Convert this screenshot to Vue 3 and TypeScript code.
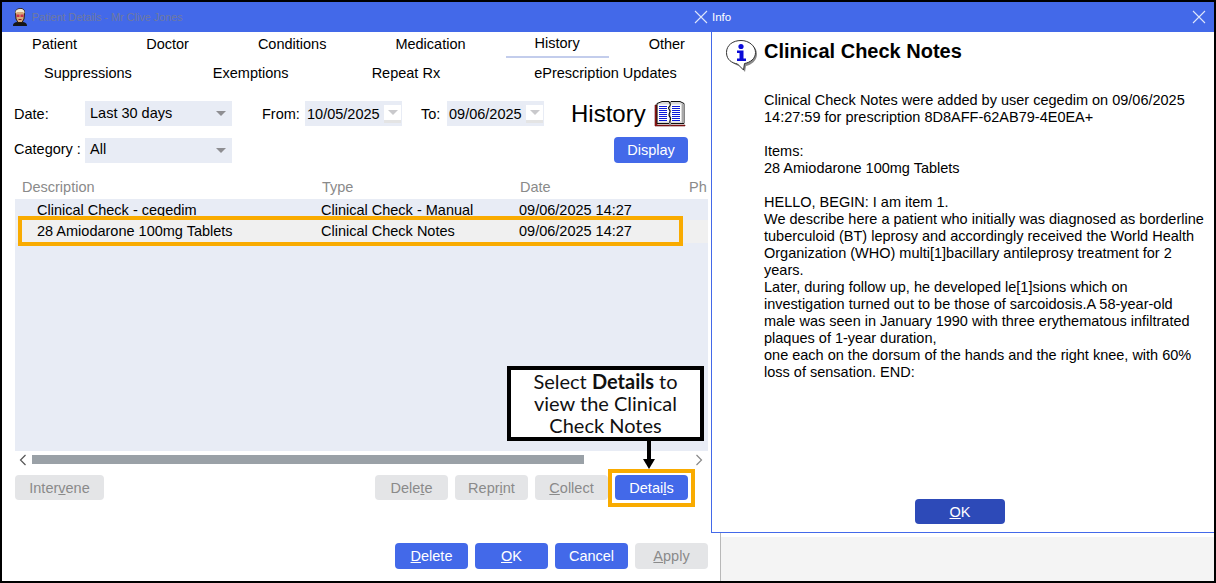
<script setup lang="ts">
const tabsOne = ['Patient', 'Doctor', 'Conditions', 'Medication', 'History', 'Other']
const infoLines = [
  'Clinical Check Notes were added by user cegedim on 09/06/2025',
  '14:27:59 for prescription 8D8AFF-62AB79-4E0EA+',
  '',
  'Items:',
  '28 Amiodarone 100mg Tablets',
  '',
  'HELLO, BEGIN: I am item 1.',
  'We describe here a patient who initially was diagnosed as borderline',
  'tuberculoid (BT) leprosy and accordingly received the World Health',
  'Organization (WHO) multi[1]bacillary antileprosy treatment for 2',
  'years.',
  'Later, during follow up, he developed le[1]sions which on',
  'investigation turned out to be those of sarcoidosis.A 58-year-old',
  'male was seen in January 1990 with three erythematous infiltrated',
  'plaques of 1-year duration,',
  'one each on the dorsum of the hands and the right knee, with 60%',
  'loss of sensation. END:',
]
</script>

<template>
  <div class="app">
    <header class="titlebar">
      <div class="title-left">
        <svg class="face" viewBox="0 0 16 18" width="16" height="18">
          <path d="M1 18c0-3 2-4 5-4l2 1 2-1c3 0 5 1 5 4z" fill="#161616"/>
          <path d="M3.500 5C3 2 6 .500 8.500.500S13 2 12.500 5l-.5 6-2 3.500H6L4 11z" fill="#d8a878" stroke="#2a1a10" stroke-width="1"/>
          <path d="M3.500 5.500C3 2 6 1 8.500 1s4.500 1.500 4 4.500l-1.500-1.500H5z" fill="#f4ecd0"/>
          <path d="M4.500 6.500h3v2.500h-3zM8.500 6.500h3v2.500h-3z" fill="#c8324a"/>
          <path d="M6.500 11.500h3" stroke="#8a2020" stroke-width="1"/>
        </svg>
        <span class="title-text">Patient Details - Mr Clive Jones</span>
        <svg class="close" viewBox="0 0 14 14" width="14" height="14">
          <path d="M1 1l12 12M13 1L1 13" stroke="#dfe6fb" stroke-width="1.100" fill="none"/>
        </svg>
      </div>
      <div class="title-right">
        <span class="info-title">Info</span>
        <svg class="close" viewBox="0 0 14 14" width="14" height="14">
          <path d="M1 1l12 12M13 1L1 13" stroke="#dfe6fb" stroke-width="1.100" fill="none"/>
        </svg>
      </div>
    </header>

    <div class="body">
      <section class="left">
        <nav class="tabs one">
          <span v-for="t in tabsOne" :key="t" class="tab" :class="{ active: t === 'History' }">{{ t }}</span>
        </nav>
        <nav class="tabs two">
          <span>Suppressions</span>
          <span>Exemptions</span>
          <span class="repeat">Repeat Rx</span>
          <span class="last">ePrescription Updates</span>
        </nav>

        <div class="form-row first">
          <label class="lab">Date:</label>
          <div class="select"><span>Last 30 days</span><i class="tri"></i></div>
          <label class="from">From:</label>
          <div class="date"><span>10/05/2025</span><b class="drop"><i class="tri light"></i></b></div>
          <label class="to">To:</label>
          <div class="date"><span>09/06/2025</span><b class="drop"><i class="tri light"></i></b></div>
          <span class="big">History</span>
          <svg class="book" viewBox="0 0 32 26" width="32" height="26">
            <path d="M1 4h2v20h12l1 1 1-1h14v1H1z" fill="#a01818" stroke="#5a0c0c" stroke-width=".6"/>
            <path d="M3 2.500l5-2h7l1 1 1-1h9l4 2v20H17l-1 1-1-1H3z" fill="#d8d8d8" stroke="#111" stroke-width="1"/>
            <path d="M4 3.500h11v17H4zM17 3.500h10v17H17z" fill="#fff"/>
            <path d="M28 3h2v19h-2z" fill="#a8a8a8"/>
            <g stroke="#0d1bd8" stroke-width="1">
              <path d="M5 5.500h8M5 7.500h8M5 9.500h8M5 11.500h8M5 13.500h8M5 15.500h8M5 17.500h8M5 19.500h8"/>
              <path d="M18 5.500h8M18 7.500h8M18 9.500h8M18 11.500h8M18 13.500h8M18 15.500h8M18 17.500h8M18 19.500h8"/>
            </g>
            <path d="M15 1c2 2 2 3 0 5s2 3 1 5-2 3 0 5-1 3 0 6" stroke="#111" stroke-width="1.200" fill="none"/>
          </svg>
        </div>

        <div class="form-row second">
          <label class="lab cat">Category :</label>
          <div class="select"><span>All</span><i class="tri"></i></div>
          <button class="btn primary display">Display</button>
        </div>

        <div class="list-head">
          <span class="c1">Description</span>
          <span class="c2">Type</span>
          <span class="c3">Date</span>
          <span class="c4">Ph</span>
        </div>

        <div class="list">
          <div class="row plain">
            <span class="c1">Clinical Check - cegedim</span>
            <span class="c2">Clinical Check - Manual</span>
            <span class="c3">09/06/2025 14:27</span>
          </div>
          <div class="row selected">
            <span class="c1">28 Amiodarone 100mg Tablets</span>
            <span class="c2">Clinical Check Notes</span>
            <span class="c3">09/06/2025 14:27</span>
          </div>
          <div class="row-mark"></div>
          <div class="callout">
            <div>Select <b>Details</b> to</div>
            <div>view the Clinical</div>
            <div>Check Notes</div>
          </div>
        </div>

        <div class="scroller">
          <svg viewBox="0 0 8 12" width="8" height="12"><path d="M6.500 1L1.500 6l5 5" stroke="#555" stroke-width="1.200" fill="none"/></svg>
          <div class="track"><div class="thumb"></div></div>
          <svg viewBox="0 0 8 12" width="8" height="12"><path d="M1.500 1l5 5-5 5" stroke="#888" stroke-width="1.200" fill="none"/></svg>
        </div>

        <div class="actions">
          <button class="btn off wide">Inter<u>v</u>ene</button>
          <span class="spacer"></span>
          <button class="btn off">Dele<u>t</u>e</button>
          <button class="btn off">Repr<u>i</u>nt</button>
          <button class="btn off"><u>C</u>ollect</button>
          <div class="details-wrap">
            <button class="btn primary">Detai<u>l</u>s</button>
            <div class="details-mark"></div>
            <div class="arrow"></div>
          </div>
        </div>

        <div class="footer">
          <button class="btn primary"><u>D</u>elete</button>
          <button class="btn primary"><u>O</u>K</button>
          <button class="btn primary">Cancel</button>
          <button class="btn off"><u>A</u>pply</button>
        </div>
      </section>

      <aside class="right">
        <div class="info">
          <div class="info-head">
            <svg class="i-icon" viewBox="0 0 32 33" width="32" height="33">
              <path d="M17 3c8 0 14 4 14 11s-6 11-11 12l-1 6-5-6C7 25 3 20 3 14 3 7 9 3 17 3z" fill="#8a8a8a"/>
              <path d="M15 .500C7 .500.500 5 .500 12.500S6 23 11.500 24l6 6 1-6.500C24 22.500 29.500 19 29.500 12.500S23 .500 15 .500z" fill="#fff" stroke="#333" stroke-width="1"/>
              <circle cx="15" cy="6.500" r="2.600" fill="#0a0ad8"/>
              <path d="M11 10.500h6.500v8H20v2.500h-9v-2.500h2.500v-5.500H11z" fill="#0a0ad8"/>
            </svg>
            <h1>Clinical Check Notes</h1>
          </div>
          <div class="info-body">
            <div v-for="(line, i) in infoLines" :key="i" class="line">{{ line }}</div>
          </div>
          <div class="info-foot">
            <button class="btn ok"><u>O</u>K</button>
          </div>
        </div>
        <div class="under">
          <div class="under-white"></div>
          <div class="under-grey"></div>
        </div>
      </aside>
    </div>
  </div>
</template>

<style scoped>
.app {
  width: 1216px;
  height: 583px;
  box-sizing: border-box;
  border: 2px solid #000;
  background: #fff;
  display: flex;
  flex-direction: column;
  overflow: hidden;
  font-family: "Liberation Sans", Arial, sans-serif;
  font-size: 14.500px;
  color: #000;
}
.titlebar {
  height: 30px;
  flex: none;
  background: #4369e9;
  display: flex;
}
.title-left {
  width: 709px;
  display: flex;
  align-items: center;
  padding-left: 10px;
  padding-right: 3px;
  box-sizing: border-box;
}
.face { margin-right: 4px; flex: none; }
.title-text {
  flex: 1;
  font-size: 10.800px;
  color: #7079a0;
}
.title-right {
  flex: 1;
  display: flex;
  align-items: center;
  justify-content: space-between;
  padding: 0 8px 0 1px;
}
.info-title { font-size: 11.500px; color: #fff; }
.body { flex: 1; display: flex; min-height: 0; }
.left { width: 709px; flex: none; display: flex; flex-direction: column; }
.tabs { display: flex; }
.tabs.one { height: 26px; padding-left: 1px; column-gap: 11px; }
.tab {
  padding: 0 29px;
  line-height: 25px;
  height: 26px;
  box-sizing: border-box;
}
.tab.active { line-height: 23px; border-bottom: 2px solid #c3cdec; }
.tabs.two { margin-top: 2px; height: 28px; line-height: 26px; padding-left: 42px; column-gap: 81px; }
.tabs.two .repeat { margin-left: 2px; }
.tabs.two .last { margin-left: 13px; }
.form-row { display: flex; align-items: center; }
.form-row.first { height: 25px; margin-top: 13px; padding-left: 12px; }
.form-row.second { height: 26px; margin-top: 11px; padding-left: 12px; }
.lab { width: 71px; flex: none; }
.lab.cat { padding-bottom: 3px; }
.select {
  width: 147px;
  height: 25px;
  background: #e8ecf5;
  display: flex;
  align-items: center;
  justify-content: space-between;
  padding: 0 6px 0 5px;
  box-sizing: border-box;
}
.select span { position: relative; top: -1px; }
.tri {
  display: block;
  width: 0;
  height: 0;
  border-left: 5px solid transparent;
  border-right: 5px solid transparent;
  border-top: 5px solid #8e8e92;
}
.tri.light { border-top-color: #c9c9cc; }
.from { margin-left: 30px; width: 43px; }
.to { margin-left: 19px; width: 26px; }
.date {
  width: 97px;
  height: 25px;
  background: #e8ecf5;
  display: flex;
  align-items: center;
  padding-left: 2px;
  box-sizing: border-box;
}
.date span { flex: 1; }
.drop {
  width: 17px;
  height: 18px;
  margin-right: 1px;
  background: #fff;
  border-bottom: 3px solid #e4e4e4;
  box-sizing: border-box;
  display: flex;
  align-items: center;
  justify-content: center;
}
.big { font-size: 24px; margin-left: 27px; }
.book { margin-left: 8px; }
.btn {
  width: 73px;
  height: 25px;
  border: 0;
  border-radius: 4px;
  padding: 0;
  font-family: inherit;
  font-size: 14.500px;
  flex: none;
}
.btn.primary { background: #4369e9; color: #fff; }
.btn.off { background: #e4e5e7; color: #8a8a8a; }
.btn.wide { width: 89px; }
.display { height: 26px; width: 74px; margin-left: 382px; }
.list-head {
  height: 23px;
  margin-top: 13px;
  padding-bottom: 1px;
  box-sizing: border-box;
  margin-left: 13px;
  width: 693px;
  position: relative;
  display: flex;
  align-items: center;
  color: #8a8a8a;
  overflow: hidden;
  flex: none;
}
.list-head .c1 { margin-left: 7px; width: 300px; }
.list-head .c2 { width: 198px; }
.list-head .c3 { width: 169px; }
.list {
  height: 252px;
  margin-left: 13px;
  width: 693px;
  background: #e8ecf5;
  position: relative;
  flex: none;
}
.row { display: flex; overflow: hidden; }
.row .c1 { margin-left: 22px; width: 284px; }
.row .c2 { width: 198px; }
.row.plain { height: 21px; line-height: 22px; }
.row.selected { height: 23px; line-height: 22px; background: #f0f0f0; }
.row-mark {
  position: absolute;
  left: 3px;
  top: 17px;
  width: 665px;
  height: 30px;
  box-sizing: border-box;
  border: 4px solid #f9ab00;
}
.callout {
  position: absolute;
  left: 492px;
  top: 167px;
  width: 197px;
  height: 75px;
  box-sizing: border-box;
  border: 4px solid #000;
  background: #fff;
  text-align: center;
  font-family: Lato, "Liberation Sans", sans-serif;
  font-size: 20px;
  line-height: 22px;
  padding-top: 0;
  color: #111;
}
.scroller {
  height: 16px;
  margin-left: 17px;
  width: 684px;
  display: flex;
  align-items: center;
  flex: none;
  padding-top: 1px;
  box-sizing: border-box;
}
.track { flex: 1; margin: 0 2px 0 5px; }
.thumb { width: 552px; height: 9px; background: #9aa1a7; }
.actions { display: flex; height: 25px; margin-top: 8px; padding-left: 13px; column-gap: 7px; }
.spacer { width: 257px; flex: none; }
.details-wrap { position: relative; }
.details-mark {
  position: absolute;
  left: -7px;
  top: -6px;
  width: 87px;
  height: 38px;
  box-sizing: border-box;
  border: 4px solid #f9ab00;
}
.arrow {
  position: absolute;
  left: 32px;
  top: -34px;
  width: 4px;
  height: 20px;
  background: #000;
}
.arrow::after {
  content: "";
  position: absolute;
  left: -4px;
  top: 18px;
  border-left: 6px solid transparent;
  border-right: 6px solid transparent;
  border-top: 10px solid #000;
}
.footer {
  display: flex;
  margin-top: 43px;
  padding-left: 393px;
  column-gap: 7px;
}
.footer .btn { height: 26px; }
.right { flex: 1; display: flex; flex-direction: column; min-width: 0; }
.info {
  height: 501px;
  flex: none;
  box-sizing: border-box;
  border-left: 1px solid #4369e9;
  border-bottom: 1px solid #4369e9;
  display: flex;
  flex-direction: column;
  position: relative;
}
.info-head { display: flex; align-items: flex-start; padding: 8px 0 0 14px; height: 52px; box-sizing: border-box; flex: none; }
.i-icon { flex: none; }
h1 { margin: -1px 0 0 6px; font-size: 20px; line-height: 24px; font-weight: 700; }
.info-body { padding: 8px 0 0 52px; flex: 1; }
.line { height: 17px; line-height: 17px; white-space: nowrap; }
.info-foot { padding: 0 0 8px 203px; }
.btn.ok { width: 90px; background: #2d4ab8; color: #fff; }
.under { flex: 1; display: flex; }
.under-white { width: 9px; flex: none; }
.under-grey {
  flex: 1;
  border-left: 1px solid #b8b8b8;
  background: linear-gradient(#fff 4px, #f4f4f4 4px);
}
</style>

<style>
html, body { margin: 0; padding: 0; background: #fff; }
</style>
